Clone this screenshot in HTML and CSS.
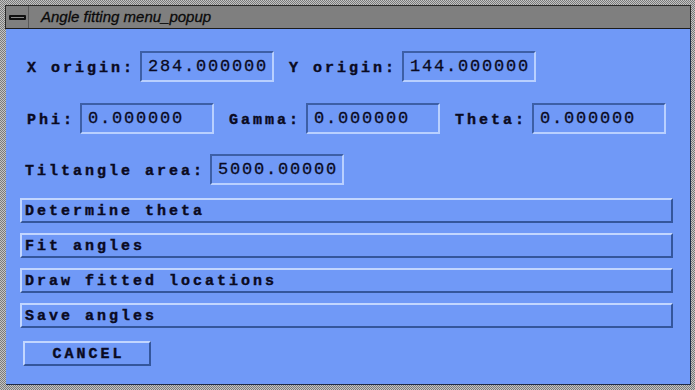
FILE: index.html
```html
<!DOCTYPE html>
<html>
<head>
<meta charset="utf-8">
<title>Angle fitting menu_popup</title>
<link rel="stylesheet" href="styles.css">
</head>
<body>

<div class="frame">
	<div class="titlebar">
		<div class="menubtn"><span class="dash"></span></div>
		<div class="title">Angle fitting menu_popup</div>
	</div>

	<div class="panel">
		<div class="row row1">
			<span class="lbl">X origin:</span>
			<span class="field">284.000000</span>
			<span class="lbl lbl-next">Y origin:</span>
			<span class="field">144.000000</span>
		</div>
		<div class="row row2">
			<span class="lbl">Phi:</span>
			<span class="field">0.000000</span>
			<span class="lbl lbl-next">Gamma:</span>
			<span class="field">0.000000</span>
			<span class="lbl lbl-next">Theta:</span>
			<span class="field">0.000000</span>
		</div>
		<div class="row row3">
			<span class="lbl">Tiltangle area:</span>
			<span class="field">5000.00000</span>
		</div>

		<div class="actions">
			<div class="btn">Determine theta</div>
			<div class="btn">Fit angles</div>
			<div class="btn">Draw fitted locations</div>
			<div class="btn">Save angles</div>
		</div>

		<div class="cancel">CANCEL</div>
	</div>
</div>

</body>
</html>
```

FILE: styles.css
```css
* {margin:0; padding:0; box-sizing:border-box;}

html, body {width:695px; height:390px; overflow:hidden;}
body {
	background-color:#9a9a9a;
	background-image:repeating-conic-gradient(#c4c4c4 0 25%, #7a7a7a 0 50%);
	background-size:2px 2px;
	font-family:"Liberation Mono", "DejaVu Sans Mono", monospace;
	color:#0a0a22;
}

.frame {position:absolute; left:5px; top:5px; width:686px; height:380px; display:flex; flex-direction:column;}

/* title bar */
.titlebar {height:24px; display:flex; background:#7f7f7f; border:1px solid #2a2a2a; border-bottom:1px solid #1c1c1c;}
.menubtn {width:23px; border-right:1px solid #5a5a5a; display:flex; align-items:center; justify-content:center;}
.dash {width:17px; height:5px; background:#8a8a8a; border:2px solid #111; border-radius:1px;}
.title {padding-left:12px; font:italic 15px/22px "Liberation Sans", Arial, sans-serif; color:#0a0a0a; -webkit-text-stroke:0.3px #0a0a0a;}

/* panel */
.panel {flex:1; background:#7099f7; margin-left:1px; border-right:1px solid #1e2a48; border-bottom:1px solid #1e2a48; padding:22px 0 0 14px;}

.row {display:flex; align-items:center; height:31px;}
.row1 {padding-left:7px;}
.row2 {margin-top:21px; padding-left:7px;}
.row3 {margin-top:20px; padding-left:5px;}

.lbl {font-weight:bold; font-size:15px; letter-spacing:3px; white-space:pre; margin-right:5px; padding-top:3px; -webkit-text-stroke:0.4px #0a0a22;}
.lbl-next {margin-left:15px;}

.field {
	width:134px; height:31px; padding-left:6px;
	border:2px solid; border-color:#3d5fa6 #b9d0ff #b9d0ff #3d5fa6;
	font-size:17px; letter-spacing:1.8px; line-height:27px;
	-webkit-text-stroke:0.3px #0a0a22;
}

.actions {margin-top:13px; display:flex; flex-direction:column; gap:10px; width:653px;}
.btn, .cancel {
	height:25px; border:2px solid; border-color:#c2d6ff #34569c #34569c #c2d6ff;
	font-weight:bold; font-size:15px; letter-spacing:3px; line-height:24px; white-space:pre;
	-webkit-text-stroke:0.4px #0a0a22;
}
.btn {padding-left:3px;}
.cancel {margin:13px 0 0 3px; width:128px; text-align:center; padding-left:3px;}
```
